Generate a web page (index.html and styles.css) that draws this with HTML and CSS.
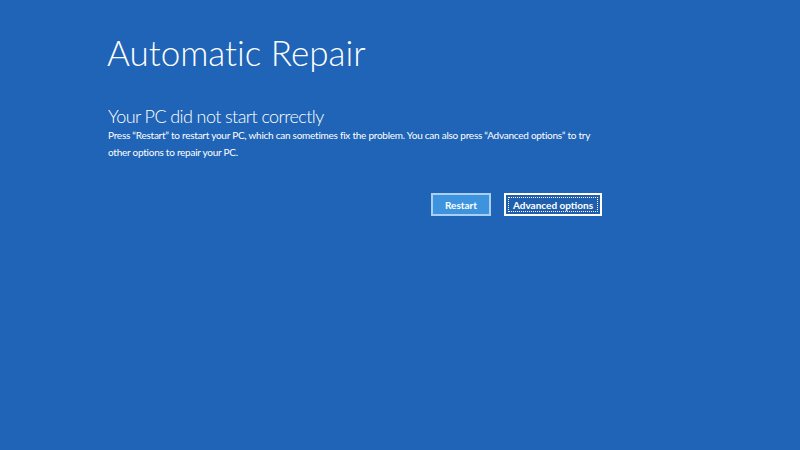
FILE: index.html
```html
<!DOCTYPE html>
<html lang="en">
<head>
	<meta charset="UTF-8">
	<meta name="viewport" content="width=device-width, initial-scale=1.0">
	<title>Automatic Repair</title>
	<link rel="stylesheet" href="styles.css">
</head>
<body>
	<div class="screen">
		<h1 class="title">Automatic Repair</h1>
		<h2 class="subtitle">Your PC did not start correctly</h2>
		<p class="message">Press “Restart” to restart your PC, which can sometimes fix the problem. You can also press “Advanced options” to try other options to repair your PC.</p>
		<div class="actions">
			<button type="button" class="btn primary">Restart</button>
			<button type="button" class="btn focused"><span>Advanced options</span></button>
		</div>
	</div>
</body>
</html>
```

FILE: styles.css
```css
html, body {margin:0; padding:0; height:100%;}
body {background-color:#1f64b6; color:#fff; font-family:Lato, "Open Sans", sans-serif; font-variant-ligatures:none; overflow:hidden;}
.screen {padding:28px 0 0 107px; width:495px;}
.title {margin:0; font-size:35px; font-weight:300; line-height:48px;}
.subtitle {margin:29px 0 0 1px; font-size:18px; font-weight:300; line-height:22px; letter-spacing:-0.6px;}
.message {margin:0 0 0 1px; font-size:10px; line-height:17px; letter-spacing:-0.25px;}
.actions {display:flex; justify-content:flex-end; gap:13px; margin-top:32px;}
.btn {box-sizing:border-box; height:23px; border:2px solid #fff; color:#fff; font-family:inherit; font-size:10px; font-weight:700; padding:0; cursor:pointer;}
.btn.primary {width:60px; background-color:#3d93dd; border-color:#a9d0f2;}
.btn.focused {width:98px; background-color:#1f5fae; padding:2px;}
.btn.focused span {display:flex; align-items:center; justify-content:center; height:100%; border:1px dotted #fff; box-sizing:border-box; white-space:nowrap;}
```
